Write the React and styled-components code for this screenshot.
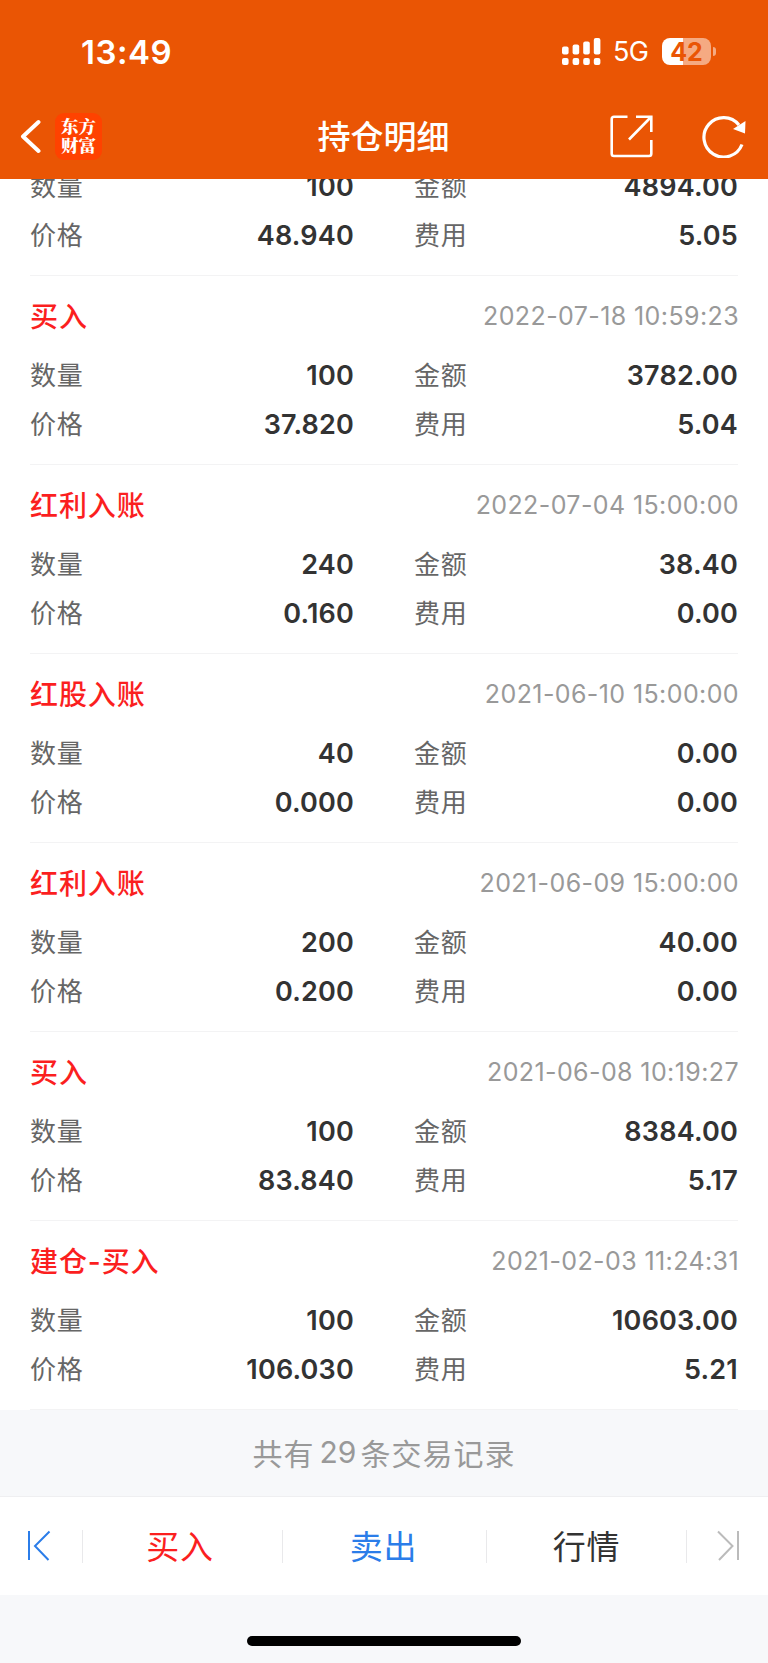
import React from 'react'
import styled, { createGlobalStyle } from "styled-components";

const GlobalStyle = createGlobalStyle`
  * {
    box-sizing: border-box;
  }
  body {
    margin: 0;
    background: #f7f8fa;
    font-family: Inter, "Noto Sans CJK SC", sans-serif;
  }
`;

const Page = styled.div`
  width: 768px;
  height: 1663px;
  display: flex;
  flex-direction: column;
  overflow: hidden;
`;

const Header = styled.header`
  height: 179px;
  flex: none;
  background: #ea5504;
  color: #fff;
`;

const StatusBar = styled.div`
  height: 94px;
  padding: 8px 52px 0 81px;
  display: flex;
  align-items: center;
  justify-content: space-between;
`;

const Clock = styled.span`
  padding-top: 1px;
  font-size: 33px;
  font-weight: 560;
  line-height: 40px;
  letter-spacing: 0.5px;
`;

const StatusRight = styled.div`
  display: flex;
  align-items: center;
`;

const Network = styled.span`
  width: 36px;
  margin: 2px 13px 0 12px;
  font-size: 27px;
  line-height: 32px;
  letter-spacing: -0.6px;
  white-space: nowrap;
`;

const Battery = styled.div`
  width: 49px;
  height: 27px;
  border-radius: 8px;
  background: linear-gradient(to right, #fff 43%, #f5aa82 43%);
  color: #ea5504;
  font-size: 25px;
  font-weight: 700;
  line-height: 28px;
  text-align: center;
`;

const BatteryCap = styled.div`
  width: 3px;
  height: 9px;
  margin-left: 2px;
  border-radius: 0 4px 4px 0;
  background: #f5aa82;
`;

const NavBar = styled.div`
  height: 85px;
  padding: 0 22px 0 20px;
  display: grid;
  grid-template-columns: 200px 1fr 200px;
  align-items: center;
`;

const NavSide = styled.div`
  display: flex;
  align-items: center;
  justify-content: ${props => (props.$end ? "flex-end" : "flex-start")};
  gap: ${props => (props.$end ? "49px" : "14px")};
`;

const Logo = styled.div`
  width: 47px;
  height: 47px;
  margin-top: -1px;
  padding-top: 3px;
  border-radius: 9px;
  background: #ff4200;
  font-family: "Noto Serif CJK SC", "Noto Sans CJK SC", sans-serif;
  font-size: 17.5px;
  font-weight: 900;
  line-height: 19.5px;
  text-align: center;
`;

const Title = styled.h1`
  margin: 0;
  padding: 1px 0 0 1px;
  font-size: 33px;
  font-weight: 500;
  line-height: 44px;
  text-align: center;
`;

const List = styled.main`
  height: 1231px;
  flex: none;
  padding: 0 30px;
  display: flex;
  flex-direction: column;
  justify-content: flex-end;
  overflow: hidden;
  background: #fff;
`;

const Record = styled.section`
  flex: none;
  padding-bottom: 16px;
  border-bottom: 1px solid #f3f3f4;
`;

const RecordHead = styled.div`
  height: 74px;
  padding-top: 6px;
  display: flex;
  align-items: center;
  justify-content: space-between;
`;

const Kind = styled.span`
  padding-bottom: 3px;
  font-size: 28px;
  font-weight: 500;
  letter-spacing: 0.9px;
  color: #fb1f1f;
`;

const Time = styled.time`
  margin-right: -1px;
  font-size: 25px;
  letter-spacing: 0.4px;
  color: #999;
`;

const Fields = styled.div`
  display: grid;
  grid-template-columns: 324px 324px;
  column-gap: 60px;
`;

const Field = styled.div`
  height: 49px;
  display: flex;
  align-items: center;
  justify-content: space-between;
`;

const Label = styled.span`
  padding-bottom: 2px;
  font-size: 26px;
  letter-spacing: 0.8px;
  color: #666;
`;

const Value = styled.span`
  padding-top: 1px;
  font-size: 27px;
  font-weight: 600;
  letter-spacing: 0.2px;
  color: #333;
`;

const Total = styled.div`
  height: 87px;
  flex: none;
  padding-bottom: 3px;
  display: flex;
  align-items: center;
  justify-content: center;
  border-bottom: 1px solid #efeff1;
  font-size: 30px;
  letter-spacing: 1px;
  color: #999;
`;

const TotalNumber = styled.span`
  margin: 0 4px 0 5px;
  letter-spacing: 0;
`;

const TabBar = styled.nav`
  height: 98px;
  flex: none;
  display: grid;
  grid-template-columns: 83px 200px 204px 200px 81px;
  align-items: center;
  background: #fff;
`;

const Tab = styled.div`
  height: 33px;
  padding-right: ${props => props.$shift || 0}px;
  padding-bottom: ${props => (props.$icon ? 0 : 2)}px;
  display: flex;
  align-items: center;
  justify-content: center;
  border-right: ${props => (props.$last ? "none" : "1px solid #e9e9eb")};
  font-size: 33px;
  letter-spacing: 0.8px;
  color: ${props => props.$color};
`;

const HomeArea = styled.footer`
  flex: 1;
  padding-top: 41px;
`;

const HomeBar = styled.div`
  width: 274px;
  height: 10px;
  margin: 0 auto;
  border-radius: 5px;
  background: #000;
`;

const records = [
  { count: "100", amount: "4894.00", price: "48.940", fee: "5.05" },
  { kind: "买入", time: "2022-07-18 10:59:23", count: "100", amount: "3782.00", price: "37.820", fee: "5.04" },
  { kind: "红利入账", time: "2022-07-04 15:00:00", count: "240", amount: "38.40", price: "0.160", fee: "0.00" },
  { kind: "红股入账", time: "2021-06-10 15:00:00", count: "40", amount: "0.00", price: "0.000", fee: "0.00" },
  { kind: "红利入账", time: "2021-06-09 15:00:00", count: "200", amount: "40.00", price: "0.200", fee: "0.00" },
  { kind: "买入", time: "2021-06-08 10:19:27", count: "100", amount: "8384.00", price: "83.840", fee: "5.17" },
  { kind: "建仓-买入", time: "2021-02-03 11:24:31", count: "100", amount: "10603.00", price: "106.030", fee: "5.21" },
];

function Signal() {
  const tops = [8.5, 6.5, 3.5, 0];
  return (
    <svg width="39" height="27" viewBox="0 0 39 27" fill="#fff">
      {tops.map((top, i) => (
        <g key={top}>
          <rect x={i * 10.6} y={top} width="6.6" height={16.5 - top} rx="2" />
          <rect x={i * 10.6} y="20" width="6.6" height="7" rx="2" />
        </g>
      ))}
    </svg>
  );
}

function BackIcon() {
  return (
    <svg width="21" height="36" viewBox="0 0 21 36" fill="none" stroke="#fff" strokeWidth="4" strokeLinecap="round" strokeLinejoin="round">
      <path d="M18.5 3L3 17.500L18.5 32" />
    </svg>
  );
}

function ShareIcon() {
  return (
    <svg width="43" height="43" viewBox="0 0 43 43" fill="none" stroke="#fff" strokeWidth="2.6">
      <path d="M17.5 1.8H4Q1.7 1.8 1.7 4V38.800Q1.700 41 4 41H39Q41.300 41 41.300 38.800V25" />
      <path d="M26 1.800H41.300V17M40.500 2.500L19 24.500" />
    </svg>
  );
}

function RefreshIcon() {
  return (
    <svg width="44" height="43" viewBox="0 0 44 43" fill="none">
      <path d="M37 10A19.700 19.700 0 1 0 40 29.500" stroke="#fff" strokeWidth="3.2" />
      <path d="M43.500 6L43 18.500L31 14Z" fill="#fff" />
    </svg>
  );
}

function EdgeIcon({ color, flip }) {
  return (
    <svg width="24" height="32" viewBox="0 0 24 32" fill="none" stroke={color} strokeWidth="2">
      <path d={flip ? "M22 1V30M2 1.500L16.500 16L3 30" : "M2 1V30M22.500 1.500L8 16L21.500 30"} />
    </svg>
  );
}

function Item({ label, value }) {
  return (
    <Field>
      <Label>{label}</Label>
      <Value>{value}</Value>
    </Field>
  );
}

function App() {
  return (
    <>
      <GlobalStyle />
      <Page>
        <Header>
          <StatusBar>
            <Clock>13:49</Clock>
            <StatusRight>
              <Signal />
              <Network>5G</Network>
              <Battery>42</Battery>
              <BatteryCap />
            </StatusRight>
          </StatusBar>
          <NavBar>
            <NavSide>
              <BackIcon />
              <Logo>东方<br />财富</Logo>
            </NavSide>
            <Title>持仓明细</Title>
            <NavSide $end>
              <ShareIcon />
              <RefreshIcon />
            </NavSide>
          </NavBar>
        </Header>
        <List>
          {records.map((r, i) => (
            <Record key={i}>
              {r.kind && (
                <RecordHead>
                  <Kind>{r.kind}</Kind>
                  <Time>{r.time}</Time>
                </RecordHead>
              )}
              <Fields>
                <Item label="数量" value={r.count} />
                <Item label="金额" value={r.amount} />
                <Item label="价格" value={r.price} />
                <Item label="费用" value={r.fee} />
              </Fields>
            </Record>
          ))}
        </List>
        <Total>共有<TotalNumber>29</TotalNumber>条交易记录</Total>
        <TabBar>
          <Tab $color="#2b7de9" $shift={5} $icon><EdgeIcon color="#2b7de9" /></Tab>
          <Tab $color="#fb1f1f" $shift={5}>买入</Tab>
          <Tab $color="#2b7de9" $shift={2}>卖出</Tab>
          <Tab $color="#333">行情</Tab>
          <Tab $color="#bbb" $icon $last><EdgeIcon color="#bbb" flip /></Tab>
        </TabBar>
        <HomeArea>
          <HomeBar />
        </HomeArea>
      </Page>
    </>
  )
}

export default App;
